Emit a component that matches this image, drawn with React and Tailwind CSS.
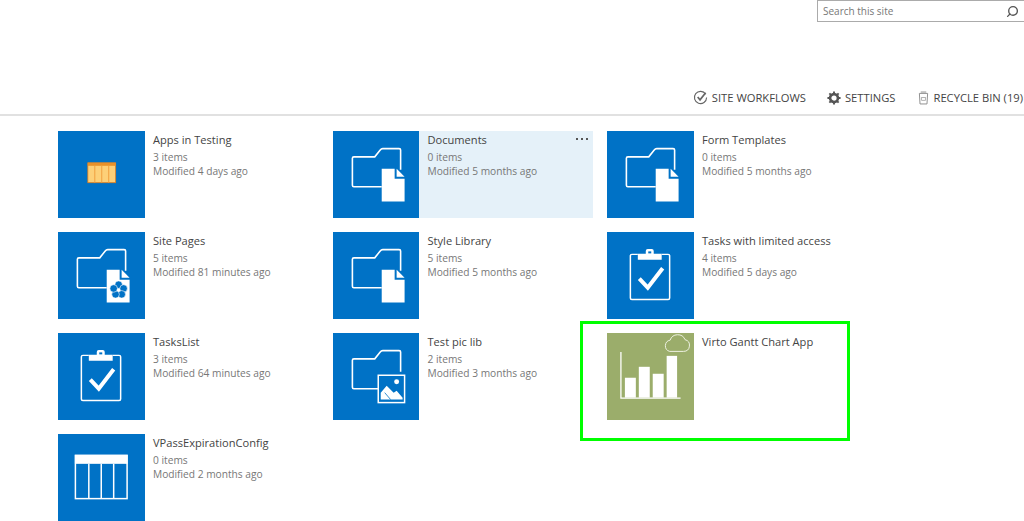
import React from "react";
import { Search } from "lucide-react";

const FolderOutline = () => (
    <path
        d="M49 56H21Q19.500 56 19.500 54.500V27.500Q19.500 26 21 26H42L47.500 19Q48.500 17.700 50 17.700H66.500Q68 17.700 68 19.200V39"
        fill="none"
        stroke="#fff"
        strokeWidth="1.600"
    />
);

// page with a folded corner, the gap between body and fold is the tile blue
const DocShape = () => (
    <g fill="#fff">
        <path d="M49 38H62V48H72V71H49Z" />
        <path d="M64 38L72 46H64Z" />
    </g>
);

const Svg = ({ children }) => (
    <svg viewBox="0 0 87 87" className="w-[86.500px] h-[86.500px] block">
        {children}
    </svg>
);

const DocIcon = () => (
    <Svg>
        <FolderOutline />
        <DocShape />
    </Svg>
);

const PagesIcon = () => (
    <Svg>
        <FolderOutline />
        <DocShape />
        <g fill="#0072c6" stroke="#fff" strokeWidth="0.600">
            <circle cx="61" cy="53" r="3.800" />
            <circle cx="66" cy="56.800" r="3.800" />
            <circle cx="64.100" cy="62.700" r="3.800" />
            <circle cx="57.900" cy="62.700" r="3.800" />
            <circle cx="56" cy="56.800" r="3.800" />
        </g>
        <circle cx="61" cy="58.500" r="1.500" fill="#fff" />
    </Svg>
);

const PicIcon = () => (
    <Svg>
        <FolderOutline />
        <rect x="45.500" y="42.500" width="26.500" height="27.500" fill="#0072c6" stroke="#fff" strokeWidth="1.500" />
        <circle cx="64" cy="49" r="2.500" fill="#fff" />
        <path d="M48 67V60L54 53L61 60L64 58L70 65V67Z" fill="#fff" />
        <path d="M58 67L52 60" stroke="#0072c6" strokeWidth="0.800" />
    </Svg>
);

const TaskIcon = () => (
    <Svg>
        <path d="M31 22.500H25Q23.500 22.500 23.500 24V66.500Q23.500 68 25 68H61.500Q63 68 63 66.500V24Q63 22.500 61.500 22.500H55" fill="none" stroke="#fff" strokeWidth="1.500" />
        <path d="M31 28V22H39V19Q39 17 41 17H45Q47 17 47 19V22H55V28Z" fill="#fff" />
        <rect x="41.500" y="19.500" width="3" height="2" fill="#0072c6" />
        <path d="M32.500 47L41 56L56 36.500" fill="none" stroke="#fff" strokeWidth="4" />
    </Svg>
);

const TableIcon = () => (
    <Svg>
        <rect x="17.500" y="21.500" width="52" height="43.500" fill="none" stroke="#fff" strokeWidth="1.500" />
        <rect x="17" y="21" width="53" height="9" fill="#fff" />
        <path d="M31 30V65M43.500 30V65M56 30V65" stroke="#fff" strokeWidth="1.500" />
    </Svg>
);

const OrangeTableIcon = () => (
    <Svg>
        <rect x="30" y="32" width="28" height="20" fill="#fdd078" stroke="#e07c1a" strokeWidth="0.800" />
        <rect x="30" y="32" width="28" height="3" fill="#e8912a" />
        <path d="M37 35V52M44 35V52M51 35V52" stroke="#f0a040" strokeWidth="1" />
    </Svg>
);

const GanttIcon = () => (
    <Svg>
        <path d="M14 19V65.500H74" fill="none" stroke="#fff" strokeWidth="1.300" />
        <rect x="18" y="45" width="11" height="20" fill="#fff" />
        <rect x="32" y="34" width="11" height="31" fill="#fff" />
        <rect x="46" y="41" width="11" height="24" fill="#fff" />
        <rect x="60" y="23" width="10.500" height="42" fill="#fff" />
        <path
            d="M63 18.500H77A6 6 0 0 0 78.500 6.700A8 8 0 0 0 63.500 7.200A5.800 5.800 0 0 0 63 18.500Z"
            fill="#9bad6b"
            stroke="#eef1e2"
            strokeWidth="1"
        />
    </Svg>
);

const lists = [
    { title: "Apps in Testing", items: "3 items", modified: "Modified 4 days ago", icon: <OrangeTableIcon /> },
    { title: "Documents", items: "0 items", modified: "Modified 5 months ago", icon: <DocIcon />, active: true },
    { title: "Form Templates", items: "0 items", modified: "Modified 5 months ago", icon: <DocIcon /> },
    { title: "Site Pages", items: "5 items", modified: "Modified 81 minutes ago", icon: <PagesIcon /> },
    { title: "Style Library", items: "5 items", modified: "Modified 5 months ago", icon: <DocIcon /> },
    { title: "Tasks with limited access", items: "4 items", modified: "Modified 5 days ago", icon: <TaskIcon /> },
    { title: "TasksList", items: "3 items", modified: "Modified 64 minutes ago", icon: <TaskIcon /> },
    { title: "Test pic lib", items: "2 items", modified: "Modified 3 months ago", icon: <PicIcon /> },
    { title: "Virto Gantt Chart App", icon: <GanttIcon />, app: true },
    { title: "VPassExpirationConfig", items: "0 items", modified: "Modified 2 months ago", icon: <TableIcon /> },
];

const Tile = ({ title, items, modified, icon, active, app }) => (
    <div className={`relative flex w-[260px] h-[87px] ${active ? "bg-[#e5f1f9]" : ""}`}>
        <div className={`w-[86.500px] h-[86.500px] shrink-0 ${app ? "bg-[#9bad6b]" : "bg-[#0072c6]"}`}>{icon}</div>
        <div className="pl-[8.500px] pt-[1px]">
            <p className="text-[11.100px] leading-[16px] text-[#444444]">{title}</p>
            {items && <p className="mt-[2px] text-[10.200px] leading-[14px] text-[#777777]">{items}</p>}
            {modified && <p className="text-[10.200px] leading-[14px] text-[#777777]">{modified}</p>}
        </div>
        {active && (
            <div className="absolute right-[5px] top-[7px] flex gap-[3px]">
                <span className="w-[2px] h-[2px] bg-[#555555]" />
                <span className="w-[2px] h-[2px] bg-[#555555]" />
                <span className="w-[2px] h-[2px] bg-[#555555]" />
            </div>
        )}
    </div>
);

export default function App() {
    return (
        <div className="relative w-[1024px] h-[521px] overflow-hidden bg-white font-['Open_Sans',sans-serif]">
            {/* search box */}
            <div className="flex justify-end h-[22px]">
                <div className="flex items-center justify-between w-[207px] h-[22px] border-l border-b border-t border-[#ababab] pl-[5px] pr-[5px]">
                    <span className="text-[10px] text-[#777777]">Search this site</span>
                    <Search size={13} strokeWidth={2.500} className="text-[#555555] -scale-x-100" />
                </div>
            </div>

            {/* ribbon links */}
            <div className="flex justify-end items-end h-[94px] pb-[9px] pr-[1px] gap-[21px] border-b-2 border-[#e1e1e1] text-[11.200px] leading-[15px] text-[#444444]">
                <div className="flex items-center gap-[4px]">
                    <svg viewBox="0 0 16 16" className="w-[15px] h-[15px]">
                        <path d="M13.500 4.500A6.500 6.500 0 1 0 14.500 8" fill="none" stroke="#666" strokeWidth="1.200" />
                        <path d="M5 7.500L7.500 10.500L13.500 3" fill="none" stroke="#666" strokeWidth="1.800" />
                    </svg>
                    SITE WORKFLOWS
                </div>
                <div className="flex items-center gap-[4px] mr-[2px]">
                    <svg viewBox="0 0 16 16" className="w-[14px] h-[14px]">
                        <circle cx="8" cy="8" r="4.500" fill="none" stroke="#555" strokeWidth="3" />
                        <path d="M8 0.500V3M8 13V15.500M0.500 8H3M13 8H15.500M2.700 2.700L4.500 4.500M11.500 11.500L13.300 13.300M13.300 2.700L11.500 4.500M4.500 11.500L2.700 13.300" stroke="#555" strokeWidth="2.200" />
                    </svg>
                    SETTINGS
                </div>
                <div className="flex items-center gap-[4px]">
                    <svg viewBox="0 0 12 15" className="w-[11px] h-[14px]">
                        <path d="M1.500 2.500H10.500L9.800 14H2.200Z" fill="none" stroke="#888" strokeWidth="1" />
                        <path d="M3 1H9" stroke="#888" strokeWidth="1" />
                        <rect x="4" y="7" width="4" height="3" fill="none" stroke="#999" strokeWidth="0.800" />
                    </svg>
                    RECYCLE BIN (19)
                </div>
            </div>

            {/* list tiles */}
            <div className="grid grid-cols-[274.500px_274.500px_260px] gap-y-[14px] pl-[58px] pt-[15px]">
                {lists.map((list) => (
                    <Tile key={list.title} {...list} />
                ))}
            </div>

            {/* highlight annotation */}
            <div className="absolute left-[580px] top-[321px] w-[270px] h-[120px] border-[3px] border-[#00ff00]" />
        </div>
    );
}
